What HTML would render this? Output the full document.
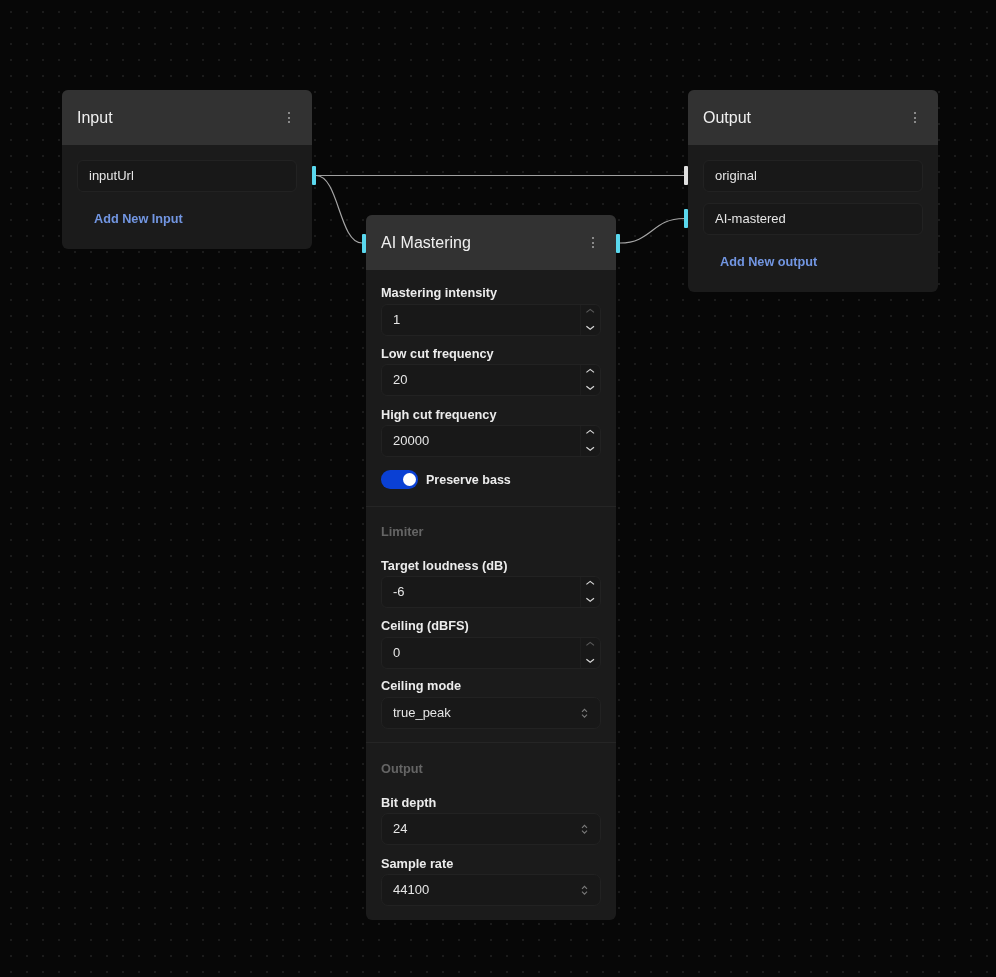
<!DOCTYPE html>
<html><head><meta charset="utf-8">
<style>
*{box-sizing:border-box;margin:0;padding:0}
html,body{width:996px;height:977px;overflow:hidden}
body{background:#070707;font-family:"Liberation Sans",sans-serif;position:relative;color:#e8e8e8}
.dots{position:absolute;left:0;top:0;width:996px;height:977px;
 background-image:radial-gradient(circle at 1px 1px,#1b1b1b 1px,transparent 1.3px);
 background-size:16px 16px;background-position:10px 11px}
.node{will-change:transform;position:absolute;width:250px;background:#1b1b1b;border-radius:6px;overflow:visible}
.hdr{height:55px;background:#323232;border-radius:6px 6px 0 0;position:relative}
.hdr .t{position:absolute;left:15px;top:0;line-height:55px;font-size:16px;color:#f0f0f0}
.keb{position:absolute;right:21px;top:22px;width:3px;height:12px}
.keb i{display:block;width:2px;height:2px;border-radius:1px;background:#a8a8a8;margin-bottom:2.5px}
.fld{position:absolute;left:15px;width:220px;height:32px;border:1px solid #222222;border-radius:6px;background:#181818;font-size:13px;color:#e6e6e6;padding-left:11px;line-height:30px}
.add{position:absolute;font-size:12.7px;font-weight:bold;color:#7296e2}
.handle{position:absolute;width:4px;height:19px;background:#5ad8ee;border-radius:1px}
.lbl{position:absolute;left:15px;font-size:13px;font-weight:bold;color:#ececec}
.sec{position:absolute;left:15px;font-size:13px;font-weight:bold;color:#656565}
.div{position:absolute;left:0;width:250px;height:1px;background:#252525}

.lbl,.sec{line-height:15px;font-size:12.75px;white-space:nowrap}
.num{position:absolute;left:15px;width:220px;height:32px;border:1px solid #222222;border-radius:6px;background:#181818;font-size:13px;color:#e6e6e6;padding-left:11px;line-height:30px}
.num .sp{position:absolute;right:0;top:0;width:20px;height:30px;border-left:1px solid #1e1e1e}
.num svg{position:absolute;left:0;top:0}
.sel{position:absolute;left:15px;width:220px;height:32px;border:1px solid #222222;border-radius:7px;background:#181818;font-size:13px;color:#e6e6e6;padding-left:11px;line-height:30px}
.sel svg{position:absolute;right:12px;top:10px}
.tog{position:absolute;left:15.3px;width:37px;height:18.5px;border-radius:9.25px;background:#0a40d4}
.tog i{position:absolute;left:22px;top:2.8px;width:13px;height:13px;border-radius:50%;background:#fff}
.tl{position:absolute;left:60px;font-size:12.5px;font-weight:bold;color:#ececec;line-height:15px}
svg.wires{position:absolute;left:0;top:0}
</style></head><body>
<div class="dots"></div>
<svg class="wires" width="996" height="977">
 <path d="M316 175.5 L684 175.5" stroke="#a0a0a0" stroke-width="1" fill="none"/>
 <path d="M316 175.5 C339 175.5 339 243 362 243" stroke="#a6a6a6" stroke-width="1.2" fill="none"/>
 <path d="M620 243 C652 243 652 218.5 684 218.5" stroke="#a6a6a6" stroke-width="1.2" fill="none"/>
</svg>

<!-- Input node -->
<div class="node" style="left:62px;top:90px;height:159px">
 <div class="hdr"><div class="t">Input</div><div class="keb"><i></i><i></i><i></i></div></div>
 <div class="fld" style="top:70px">inputUrl</div>
 <div class="add" style="left:32px;top:121.6px">Add New Input</div>
</div>
<div class="handle" style="left:312px;top:166px"></div>

<!-- Output node -->
<div class="node" style="left:688px;top:90px;height:202px">
 <div class="hdr"><div class="t">Output</div><div class="keb"><i></i><i></i><i></i></div></div>
 <div class="fld" style="top:70px">original</div>
 <div class="fld" style="top:113px">AI-mastered</div>
 <div class="add" style="left:32px;top:164.6px">Add New output</div>
</div>
<div class="handle" style="left:684px;top:166px;background:#e0e0e0"></div>
<div class="handle" style="left:684px;top:209px"></div>

<!-- AI Mastering node -->
<div class="node" style="left:366px;top:215px;height:705px">
 <div class="hdr"><div class="t">AI Mastering</div><div class="keb"><i></i><i></i><i></i></div></div>
 <div class="lbl" style="top:70.0px">Mastering intensity</div>
 <div class="num" style="top:88.5px">1<div class="sp"><svg width="24" height="30"><path d="M5.4 7.4 L9.2 4.4 L13 7.4" stroke="#5a5a5a" stroke-width="1.2" fill="none"/><path d="M5.4 21.2 L9.2 24.2 L13 21.2" stroke="#d8d8d8" stroke-width="1.2" fill="none"/></svg></div></div>
 <div class="lbl" style="top:131.4px">Low cut frequency</div>
 <div class="num" style="top:149px">20<div class="sp"><svg width="24" height="30"><path d="M5.4 7.4 L9.2 4.4 L13 7.4" stroke="#d8d8d8" stroke-width="1.2" fill="none"/><path d="M5.4 21.2 L9.2 24.2 L13 21.2" stroke="#d8d8d8" stroke-width="1.2" fill="none"/></svg></div></div>
 <div class="lbl" style="top:191.8px">High cut frequency</div>
 <div class="num" style="top:209.5px">20000<div class="sp"><svg width="24" height="30"><path d="M5.4 7.4 L9.2 4.4 L13 7.4" stroke="#d8d8d8" stroke-width="1.2" fill="none"/><path d="M5.4 21.2 L9.2 24.2 L13 21.2" stroke="#d8d8d8" stroke-width="1.2" fill="none"/></svg></div></div>
 <div class="tog" style="top:255px"><i></i></div>
 <div class="tl" style="top:257.5px">Preserve bass</div>
 <div class="div" style="top:291px"></div>
 <div class="sec" style="top:308.5px">Limiter</div>
 <div class="lbl" style="top:343.0px">Target loudness (dB)</div>
 <div class="num" style="top:361.4px">-6<div class="sp"><svg width="24" height="30"><path d="M5.4 7.4 L9.2 4.4 L13 7.4" stroke="#d8d8d8" stroke-width="1.2" fill="none"/><path d="M5.4 21.2 L9.2 24.2 L13 21.2" stroke="#d8d8d8" stroke-width="1.2" fill="none"/></svg></div></div>
 <div class="lbl" style="top:403.3px">Ceiling (dBFS)</div>
 <div class="num" style="top:421.6px">0<div class="sp"><svg width="24" height="30"><path d="M5.4 7.4 L9.2 4.4 L13 7.4" stroke="#5a5a5a" stroke-width="1.2" fill="none"/><path d="M5.4 21.2 L9.2 24.2 L13 21.2" stroke="#d8d8d8" stroke-width="1.2" fill="none"/></svg></div></div>
 <div class="lbl" style="top:463.0px">Ceiling mode</div>
 <div class="sel" style="top:482px">true_peak<svg width="7" height="11"><path d="M1 3.8 L3.5 1.3 L6 3.8 M1 6.6 L3.5 9.1 L6 6.6" stroke="#7a7a7a" stroke-width="1.1" fill="none"/></svg></div>
 <div class="div" style="top:527px"></div>
 <div class="sec" style="top:546.2px">Output</div>
 <div class="lbl" style="top:580.0px">Bit depth</div>
 <div class="sel" style="top:598px">24<svg width="7" height="11"><path d="M1 3.8 L3.5 1.3 L6 3.8 M1 6.6 L3.5 9.1 L6 6.6" stroke="#7a7a7a" stroke-width="1.1" fill="none"/></svg></div>
 <div class="lbl" style="top:641.0px">Sample rate</div>
 <div class="sel" style="top:659px">44100<svg width="7" height="11"><path d="M1 3.8 L3.5 1.3 L6 3.8 M1 6.6 L3.5 9.1 L6 6.6" stroke="#7a7a7a" stroke-width="1.1" fill="none"/></svg></div>
</div>
<div class="handle" style="left:362px;top:233.5px"></div>
<div class="handle" style="left:616px;top:233.5px"></div>

</body></html>
